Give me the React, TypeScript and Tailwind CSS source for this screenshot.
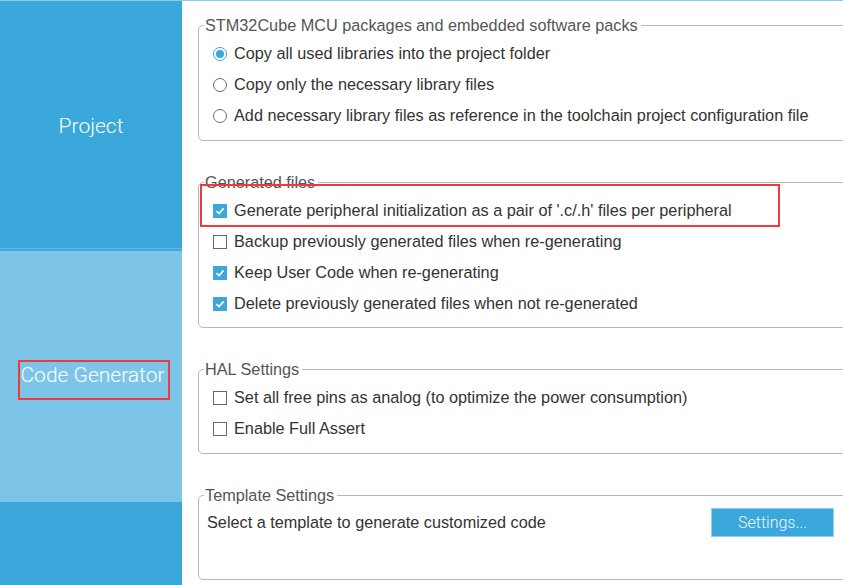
import type { ReactNode } from 'react'

const BODY_FONT = { fontFamily: '"Liberation Sans", Arial, sans-serif' }
const SIDE_FONT = { fontFamily: 'Roboto, "Liberation Sans", sans-serif' }

function Radio({ checked }: { checked?: boolean }) {
  return (
    <span
      className={
        'flex h-[14px] w-[14px] shrink-0 items-center justify-center rounded-full border bg-white ' +
        (checked ? 'border-[#3aa8db]' : 'border-[#6b6b6b]')
      }
    >
      {checked && <span className="h-[8px] w-[8px] rounded-full bg-[#3aa8db]" />}
    </span>
  )
}

function Check({ checked }: { checked?: boolean }) {
  if (!checked) {
    return <span className="h-[14px] w-[14px] shrink-0 border border-[#6b6b6b] bg-white" />
  }
  return (
    <span className="flex h-[14px] w-[14px] shrink-0 items-center justify-center bg-[#3aa8db]">
      <svg width="10" height="10" viewBox="0 0 10 10" fill="none">
        <path d="M1.5 5.2 L4 7.6 L8.6 2.4" stroke="white" strokeWidth="1.6" />
      </svg>
    </span>
  )
}

function Row({ control, label }: { control: ReactNode; label: string }) {
  return (
    <div className="flex h-[31px] items-center gap-[7px] pl-[14px]">
      {control}
      <span className="whitespace-nowrap">{label}</span>
    </div>
  )
}

function Group({ title, children, className = '' }: { title: string; children: ReactNode; className?: string }) {
  return (
    <fieldset className={'relative w-[680px] rounded-[5px] border border-[#b4b7bc] ' + className}>
      <legend className="ml-[5px] pl-[1px] pr-[3px] text-[16.25px] leading-[18px] text-[#555]">{title}</legend>
      {children}
    </fieldset>
  )
}

export default function App() {
  return (
    <div className="flex h-[585px] w-[843px] overflow-hidden border-t border-[#86cdee] bg-white" style={BODY_FONT}>
      <aside className="flex w-[182px] shrink-0 flex-col text-white" style={SIDE_FONT}>
        <div className="flex h-[247px] items-center justify-center bg-[#3aa8db] pt-[4px] text-[21px] font-light">
          Project
        </div>
        <div className="h-[1px] bg-[#5cb9e4]" />
        <div className="h-[2px] bg-[#3fa9dc]" />
        <div className="flex h-[251px] items-center justify-center bg-[#7dc5e8] text-[21px] font-light">
          <span className="ml-[6px] mt-[7px] border-2 border-[#f03a3a] pb-[10px] pr-[3px] pt-[1px] leading-[25px]">
            Code Generator
          </span>
        </div>
        <div className="flex-1 bg-[#3aa8db]" />
      </aside>

      <main className="min-w-0 flex-1 overflow-hidden pl-[16px] pt-[15px] text-[16.25px] text-[#333]">
        <Group title="STM32Cube MCU packages and embedded software packs">
          <div className="pb-[9px] pt-[4px]">
            <Row control={<Radio checked />} label="Copy all used libraries into the project folder" />
            <Row control={<Radio />} label="Copy only the necessary library files" />
            <Row
              control={<Radio />}
              label="Add necessary library files as reference in the toolchain project configuration file"
            />
          </div>
        </Group>

        <Group title="Generated files" className="mt-[32px]">
          <div className="pb-[8px] pt-[4px]">
            <div className="relative">
              <Row control={<Check checked />} label="Generate peripheral initialization as a pair of '.c/.h' files per peripheral" />
              <div className="pointer-events-none absolute left-[1px] top-[-11px] h-[43px] w-[580px] border-2 border-[#f03a3a]" />
            </div>
            <Row control={<Check />} label="Backup previously generated files when re-generating" />
            <Row control={<Check checked />} label="Keep User Code when re-generating" />
            <Row control={<Check checked />} label="Delete previously generated files when not re-generated" />
          </div>
        </Group>

        <Group title="HAL Settings" className="mt-[32px]">
          <div className="pb-[9px] pt-[4px]">
            <Row control={<Check />} label="Set all free pins as analog (to optimize the power consumption)" />
            <Row control={<Check />} label="Enable Full Assert" />
          </div>
        </Group>

        <Group title="Template Settings" className="mt-[32px]">
          <div className="mb-[41px] mt-[3px] flex h-[31px] items-center justify-between pl-[8px] pr-[43px]">
            <span>Select a template to generate customized code</span>
            <button
              className="h-[29px] w-[123px] border border-[#8fd0ef] bg-[#3aa8db] text-[16px] font-light text-[#eef8fd]"
              style={SIDE_FONT}
            >
              Settings...
            </button>
          </div>
        </Group>
      </main>
    </div>
  )
}
